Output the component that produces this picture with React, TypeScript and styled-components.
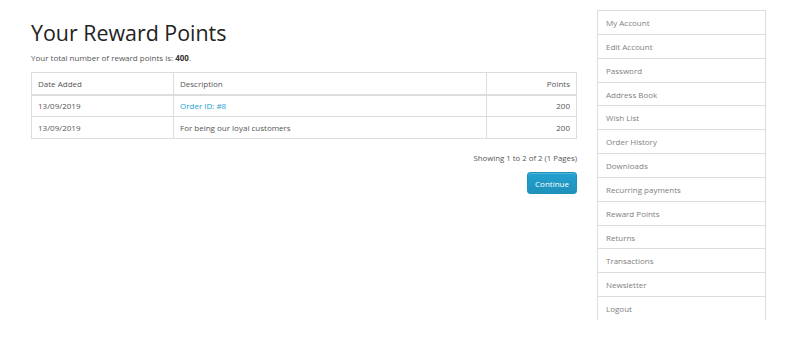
import * as React from "react";
import styled, { createGlobalStyle } from "styled-components";

const GlobalStyle = createGlobalStyle`
  html, body {
    margin: 0;
    padding: 0;
    background: #fff;
  }
  body {
    font-family: "Open Sans", "Liberation Sans", sans-serif;
    font-size: 8px;
    color: #666;
  }
`;

const SPage = styled.div`
  display: flex;
  align-items: flex-start;
  gap: 20px;
  padding: 10px 0 0 31px;
  width: 800px;
  box-sizing: border-box;
`;

const SContent = styled.div`
  width: 546px;
  padding-top: 10px;
`;

const STitle = styled.h1`
  margin: 0 0 6px;
  font-size: 21.4px;
  font-weight: 400;
  line-height: 26px;
  color: #222;
`;

const SIntro = styled.p`
  margin: 0 0 8px;
  line-height: 12px;
  color: #555;
  b {
    color: #333;
  }
`;

const STable = styled.table`
  width: 100%;
  table-layout: fixed;
  border-collapse: collapse;
  border: 1px solid #ddd;
`;

const SCell = styled.td<{ $right?: boolean; $width?: number }>`
  border: 1px solid #ddd;
  height: 22px;
  padding: 0 6px;
  text-align: ${(p) => (p.$right ? "right" : "left")};
  width: ${(p) => (p.$width ? `${p.$width}px` : "auto")};
  color: #555;
  box-sizing: border-box;
`;

const SHeadCell = styled(SCell).attrs({ as: "th" })`
  font-weight: 400;
  border-bottom-width: 2px;
`;

const SLink = styled.a`
  color: #23a1d1;
  text-decoration: none;
`;

const SPager = styled.div`
  text-align: right;
  margin: 13px 0 8px;
  line-height: 12px;
  color: #555;
  font-size: 7.8px;
`;

const SButtons = styled.div`
  display: flex;
  justify-content: flex-end;
`;

const SButton = styled.button`
  width: 50px;
  height: 22px;
  border: 1px solid #1f90bb;
  border-radius: 3px;
  background: linear-gradient(#23a1d1, #1f90bb);
  color: #fff;
  font-family: inherit;
  font-size: 8px;
  padding: 0;
  box-shadow: inset 0 1px 0 rgba(255, 255, 255, 0.2);
`;

const SSidebar = styled.nav`
  width: 169px;
  display: flex;
  flex-direction: column;
`;

const SItem = styled.a`
  display: block;
  height: 24.85px;
  line-height: 23px;
  padding: 0 8px;
  border: 1px solid #ddd;
  margin-bottom: -1px;
  color: #808080;
  text-decoration: none;
  box-sizing: border-box;
`;

const menu = [
  "My Account",
  "Edit Account",
  "Password",
  "Address Book",
  "Wish List",
  "Order History",
  "Downloads",
  "Recurring payments",
  "Reward Points",
  "Returns",
  "Transactions",
  "Newsletter",
  "Logout",
];

const rows = [
  { date: "13/09/2019", desc: "Order ID: #8", link: true, points: 200 },
  { date: "13/09/2019", desc: "For being our loyal customers", link: false, points: 200 },
];

export default function App() {
  return (
    <>
      <GlobalStyle />
      <SPage>
        <SContent>
          <STitle>Your Reward Points</STitle>
          <SIntro>
            Your total number of reward points is: <b>400</b>.
          </SIntro>
          <STable>
            <thead>
              <tr>
                <SHeadCell $width={142}>Date Added</SHeadCell>
                <SHeadCell>Description</SHeadCell>
                <SHeadCell $right $width={90}>
                  Points
                </SHeadCell>
              </tr>
            </thead>
            <tbody>
              {rows.map((r, i) => (
                <tr key={i}>
                  <SCell>{r.date}</SCell>
                  <SCell>{r.link ? <SLink href="#">{r.desc}</SLink> : r.desc}</SCell>
                  <SCell $right>{r.points}</SCell>
                </tr>
              ))}
            </tbody>
          </STable>
          <SPager>Showing 1 to 2 of 2 (1 Pages)</SPager>
          <SButtons>
            <SButton>Continue</SButton>
          </SButtons>
        </SContent>
        <SSidebar>
          {menu.map((m) => (
            <SItem key={m} href="#">
              {m}
            </SItem>
          ))}
        </SSidebar>
      </SPage>
    </>
  );
}
